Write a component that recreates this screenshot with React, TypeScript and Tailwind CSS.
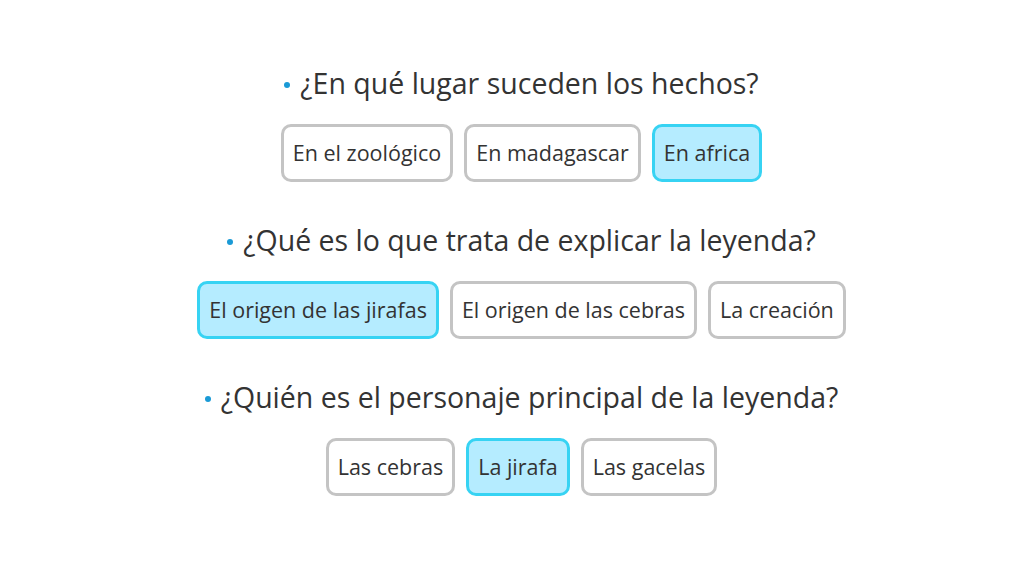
import React from "react";

type Question = { title: string; options: string[]; selected: number };

const questions: Question[] = [
  {
    title: "¿En qué lugar suceden los hechos?",
    options: ["En el zoológico", "En madagascar", "En africa"],
    selected: 2,
  },
  {
    title: "¿Qué es lo que trata de explicar la leyenda?",
    options: ["El origen de las jirafas", "El origen de las cebras", "La creación"],
    selected: 0,
  },
  {
    title: "¿Quién es el personaje principal de la leyenda?",
    options: ["Las cebras", "La jirafa", "Las gacelas"],
    selected: 1,
  },
];

export default function App() {
  return (
    <div
      className="w-[1029px] h-[583px] bg-white flex flex-col items-center pt-[67px] pl-[14px] gap-[42px] text-[#333333]"
      style={{ fontFamily: '"Open Sans", "Noto Sans", sans-serif' }}
    >
      {questions.map((q, qi) => (
        <div key={qi} className="flex flex-col items-center">
          <div className="flex items-center h-[32px] text-[28.5px] leading-[32px]">
            <span className="w-[6px] h-[6px] rounded-full bg-[#1a9ad6] mr-[10px] mt-[4px]" />
            <span>{q.title}</span>
          </div>
          <div className="flex gap-[11px] mt-[25px]">
            {q.options.map((o, oi) => (
              <div
                key={oi}
                className={`h-[58px] px-[9px] flex items-center rounded-[10px] border-[3px] text-[21.5px] ${
                  oi === q.selected
                    ? "bg-[#b5ecff] border-[#37d3f3]"
                    : "bg-white border-[#c4c4c4]"
                }`}
              >
                {o}
              </div>
            ))}
          </div>
        </div>
      ))}
    </div>
  );
}
